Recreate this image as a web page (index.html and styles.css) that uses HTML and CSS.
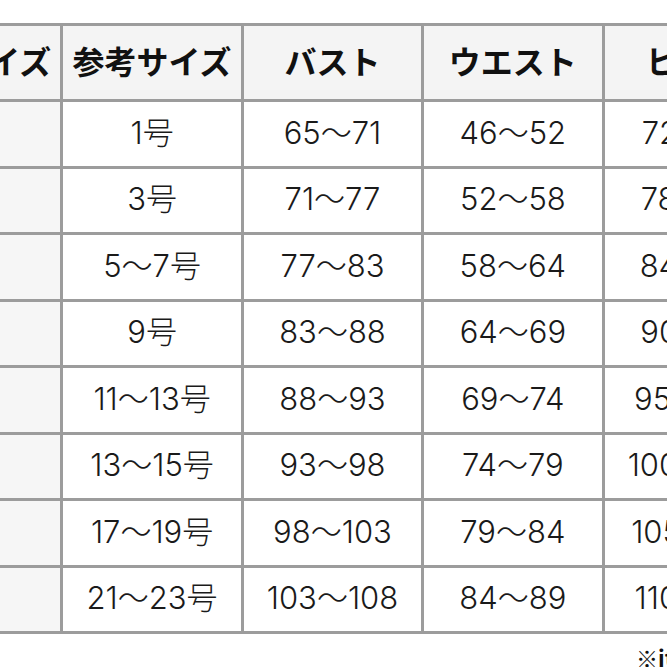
FILE: index.html
```html
<!DOCTYPE html>
<html lang="ja">
<head>
<meta charset="utf-8">
<title>サイズ表</title>
<link rel="stylesheet" href="styles.css">
</head>
<body>
<div class="page">
  <table class="size-table">
    <thead>
      <tr>
        <th>表記サイズ</th>
        <th>参考サイズ</th>
        <th>バスト</th>
        <th>ウエスト</th>
        <th>ヒップ</th>
      </tr>
    </thead>
    <tbody>
      <tr><td class="label">SS</td><td>1号</td><td>65〜71</td><td>46〜52</td><td>72〜78</td></tr>
      <tr><td class="label">S</td><td>3号</td><td>71〜77</td><td>52〜58</td><td>78〜84</td></tr>
      <tr><td class="label">M</td><td>5〜7号</td><td>77〜83</td><td>58〜64</td><td>84〜90</td></tr>
      <tr><td class="label">L</td><td>9号</td><td>83〜88</td><td>64〜69</td><td>90〜95</td></tr>
      <tr><td class="label">LL</td><td>11〜13号</td><td>88〜93</td><td>69〜74</td><td>95〜100</td></tr>
      <tr><td class="label">3L</td><td>13〜15号</td><td>93〜98</td><td>74〜79</td><td>100〜105</td></tr>
      <tr><td class="label">4L</td><td>17〜19号</td><td>98〜103</td><td>79〜84</td><td>105〜110</td></tr>
      <tr><td class="label">5L</td><td>21〜23号</td><td>103〜108</td><td>84〜89</td><td>110〜115</td></tr>
    </tbody>
  </table>
  <p class="note">※itemにより多少異なります</p>
</div>
</body>
</html>
```
FILE: styles.css
```css
html, body {
  margin: 0;
  padding: 0;
  background: #ffffff;
}

body {
  font-family: "Noto Sans CJK JP", "Noto Sans", sans-serif;
  color: #222222;
}

.page {
  width: 667px;
  height: 667px;
  overflow: hidden;
  padding-top: 23px;
  box-sizing: border-box;
}

.size-table {
  border-collapse: collapse;
  table-layout: fixed;
  width: 905px;
  margin-left: -120px;
}

.size-table th,
.size-table td {
  border: 3px solid #9c9c9c;
  text-align: center;
  vertical-align: middle;
  padding: 0;
  white-space: nowrap;
}

.size-table th {
  height: 67px;
  padding-bottom: 6px;
  background: #f4f4f4;
  font-size: 32px;
  font-weight: 700;
  color: #111111;
  line-height: 1;
}

.size-table td {
  height: 60.5px;
  padding-bottom: 3px;
  background: #ffffff;
  font-family: "Inter", "Noto Sans CJK JP", sans-serif;
  font-size: 31px;
  font-weight: 300;
  line-height: 1;
  color: #1a1a1a;
}

.size-table td.label {
  background: #f6f6f6;
}

.note {
  margin: 12px 0 0 636px;
  font-size: 22px;
  font-weight: 700;
  color: #111111;
  white-space: nowrap;
  line-height: 1;
}
```
